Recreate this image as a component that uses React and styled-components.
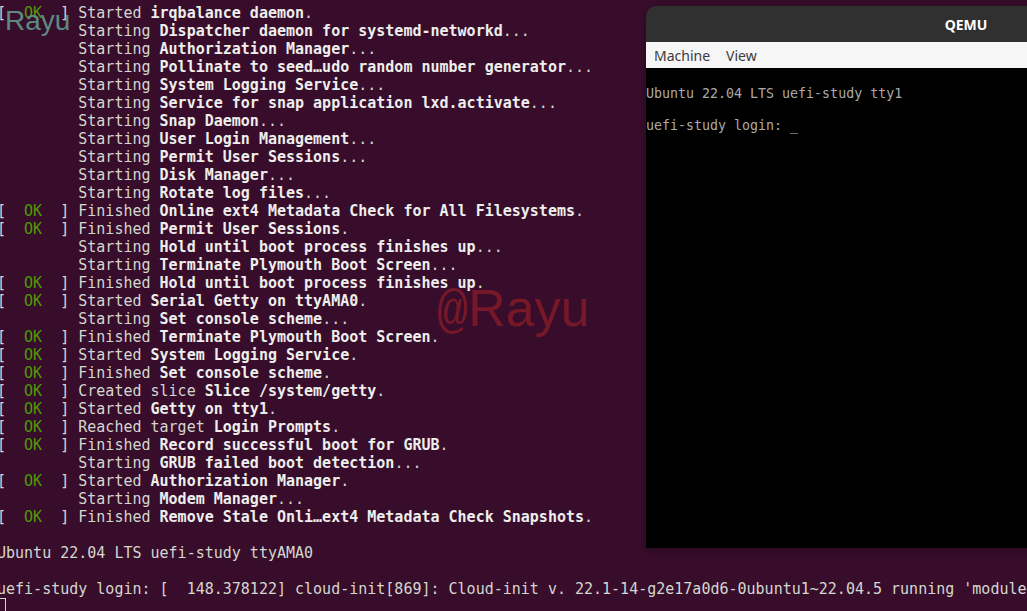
import React from 'react'
import styled, { createGlobalStyle } from 'styled-components'

const GlobalStyle = createGlobalStyle`
  html, body {
    margin: 0;
    padding: 0;
    background: #380d2b;
    overflow: hidden;
  }
`

const Screen = styled.div`
  position: relative;
  width: 100vw;
  height: 100vh;
  overflow: hidden;
  background: #380d2b;
`

const Terminal = styled.div`
  margin-left: -3px;
  padding-top: 4px;
  font-family: "DejaVu Sans Mono", "Liberation Mono", monospace;
  font-size: 15px;
  line-height: 18px;
  color: #d3d7cf;
  white-space: pre;
`

const Line = styled.div`
  height: 18px;
`

const Bold = styled.span`
  font-weight: 700;
  color: #eeeeec;
`

const Ok = styled.span`
  color: #4e9a06;
`

const Cursor = styled.span`
  display: inline-block;
  width: 9px;
  height: 18px;
  box-sizing: border-box;
  border: 1px solid #d3d7cf;
  vertical-align: top;
`

const Watermark = styled.div`
  position: absolute;
  left: ${p => p.left}px;
  top: ${p => p.top}px;
  font-family: "Liberation Sans", Arial, sans-serif;
  font-size: ${p => p.size}px;
  line-height: 1;
  color: ${p => p.color};
  pointer-events: none;
`

const At = styled.span`
  font-family: "Liberation Mono", monospace;
`

const QemuWindow = styled.div`
  position: absolute;
  left: 646px;
  top: 6px;
  width: 640px;
  height: 542px;
  border-radius: 10px 10px 0 0;
  overflow: hidden;
  display: flex;
  flex-direction: column;
  box-shadow: 0 2px 8px rgba(0, 0, 0, 0.35);
`

const TitleBar = styled.div`
  height: 36px;
  background: #303030;
  display: flex;
  align-items: center;
  justify-content: center;
  font-family: "Noto Sans", "Open Sans", sans-serif;
  font-weight: 700;
  font-size: 14px;
  color: #ffffff;
`

const MenuBar = styled.div`
  height: 26px;
  background: #f6f6f6;
  display: flex;
  align-items: center;
  font-family: "Noto Sans", "Open Sans", sans-serif;
  font-size: 14px;
  color: #3c3c3c;
`

const MenuItem = styled.span`
  padding: 0 8px;
`

const Display = styled.div`
  flex: 1;
  background: #000000;
  padding-top: 18px;
  font-family: "DejaVu Sans Mono", monospace;
  font-size: 13.3px;
  line-height: 16px;
  color: #aaaaaa;
  white-space: pre;
`

const VgaLine = styled.div`
  height: 16px;
`

const log = [
  ['ok', 'Started ', 'irqbalance daemon', '.'],
  ['', 'Starting ', 'Dispatcher daemon for systemd-networkd', '...'],
  ['', 'Starting ', 'Authorization Manager', '...'],
  ['', 'Starting ', 'Pollinate to seed\u2026udo random number generator', '...'],
  ['', 'Starting ', 'System Logging Service', '...'],
  ['', 'Starting ', 'Service for snap application lxd.activate', '...'],
  ['', 'Starting ', 'Snap Daemon', '...'],
  ['', 'Starting ', 'User Login Management', '...'],
  ['', 'Starting ', 'Permit User Sessions', '...'],
  ['', 'Starting ', 'Disk Manager', '...'],
  ['', 'Starting ', 'Rotate log files', '...'],
  ['ok', 'Finished ', 'Online ext4 Metadata Check for All Filesystems', '.'],
  ['ok', 'Finished ', 'Permit User Sessions', '.'],
  ['', 'Starting ', 'Hold until boot process finishes up', '...'],
  ['', 'Starting ', 'Terminate Plymouth Boot Screen', '...'],
  ['ok', 'Finished ', 'Hold until boot process finishes up', '.'],
  ['ok', 'Started ', 'Serial Getty on ttyAMA0', '.'],
  ['', 'Starting ', 'Set console scheme', '...'],
  ['ok', 'Finished ', 'Terminate Plymouth Boot Screen', '.'],
  ['ok', 'Started ', 'System Logging Service', '.'],
  ['ok', 'Finished ', 'Set console scheme', '.'],
  ['ok', 'Created slice ', 'Slice /system/getty', '.'],
  ['ok', 'Started ', 'Getty on tty1', '.'],
  ['ok', 'Reached target ', 'Login Prompts', '.'],
  ['ok', 'Finished ', 'Record successful boot for GRUB', '.'],
  ['', 'Starting ', 'GRUB failed boot detection', '...'],
  ['ok', 'Started ', 'Authorization Manager', '.'],
  ['', 'Starting ', 'Modem Manager', '...'],
  ['ok', 'Finished ', 'Remove Stale Onli\u2026ext4 Metadata Check Snapshots', '.'],
]

function LogLine({ status, verb, unit, tail }) {
  return (
    <Line>
      {status === 'ok' ? (
        <>[  <Ok>OK</Ok>  ] </>
      ) : (
        '         '
      )}
      {verb}
      <Bold>{unit}</Bold>
      {tail}
    </Line>
  )
}

export default function App() {
  return (
    <>
      <GlobalStyle />
      <Screen>
        <Terminal>
          {log.map(([status, verb, unit, tail], i) => (
            <LogLine key={i} status={status} verb={verb} unit={unit} tail={tail} />
          ))}
          <Line />
          <Line>Ubuntu 22.04 LTS uefi-study ttyAMA0</Line>
          <Line />
          <Line>
            uefi-study login: [  148.378122] cloud-init[869]: Cloud-init v. 22.1-14-g2e17a0d6-0ubuntu1~22.04.5 running 'modules:config' at Mon, 01 Jan 2024
          </Line>
          <Line>
            <Cursor />
          </Line>
        </Terminal>

        <Watermark left={5} top={7} size={28} color="#5d8a80">
          Rayu
        </Watermark>
        <Watermark left={437} top={282} size={52} color="#761828">
          <At>@</At>Rayu
        </Watermark>

        <QemuWindow>
          <TitleBar>QEMU</TitleBar>
          <MenuBar>
            <MenuItem>Machine</MenuItem>
            <MenuItem>View</MenuItem>
          </MenuBar>
          <Display>
            <VgaLine>Ubuntu 22.04 LTS uefi-study tty1</VgaLine>
            <VgaLine />
            <VgaLine>uefi-study login: _</VgaLine>
          </Display>
        </QemuWindow>
      </Screen>
    </>
  )
}
